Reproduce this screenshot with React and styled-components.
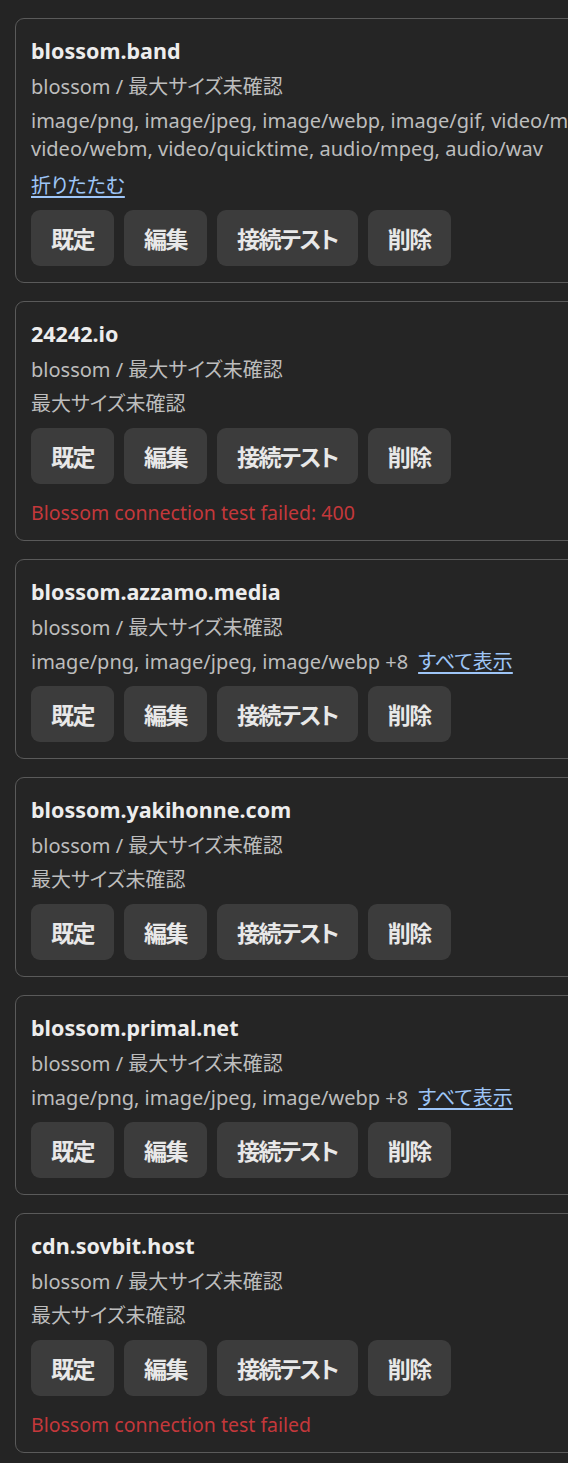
import styled, { createGlobalStyle } from 'styled-components';

const GlobalStyle = createGlobalStyle`
  html, body {
    margin: 0;
    padding: 0;
    background: #242424;
    overflow-x: hidden;
  }
  body {
    font-family: "Noto Sans", "Noto Sans CJK JP", sans-serif;
    font-feature-settings: "palt";
    color: #e6e6e6;
  }
`;

const List = styled.div`
  display: flex;
  flex-direction: column;
  gap: 18px;
  padding: 18px 0 18px 15px;
  width: 640px;
`;

const Card = styled.div`
  display: flex;
  flex-direction: column;
  gap: 6px;
  padding: 16px 15px;
  border: 1px solid #5a5a5a;
  border-radius: 9px;
  background: #252525;
`;

const Title = styled.div`
  font-size: 21.5px;
  font-weight: 700;
  line-height: 32px;
  color: #ededed;
`;

const Meta = styled.div`
  font-size: 20px;
  line-height: 28px;
  color: #bdbdbd;
`;

const Link = styled.a`
  color: #9ec5f7;
  text-decoration: underline;
  text-underline-offset: 3px;
  cursor: pointer;
  margin-left: ${(p) => (p.$inline ? '10px' : '0')};
`;

const LinkRow = styled.div`
  font-size: 20px;
  line-height: 28px;
  margin-top: 3px;
`;

const Actions = styled.div`
  display: flex;
  gap: 10px;
  margin-top: 4px;
`;

const Button = styled.button`
  height: 56px;
  padding: 0 20px;
  border: none;
  border-radius: 9px;
  background: #3c3c3c;
  color: #e8e8e8;
  font-family: inherit;
  font-feature-settings: "palt";
  font-size: 23px;
  font-weight: 700;
  letter-spacing: -1.5px;
  cursor: pointer;
`;

const ErrorText = styled.div`
  font-size: 19.5px;
  line-height: 22px;
  margin-top: 12px;
  color: #c4383b;
`;

const ALL_TYPES =
  'image/png, image/jpeg, image/webp, image/gif, video/mp4, video/webm, video/quicktime, audio/mpeg, audio/wav';

const servers = [
  { name: 'blossom.band', types: 'expanded' },
  { name: '24242.io', types: 'none', error: 'Blossom connection test failed: 400' },
  { name: 'blossom.azzamo.media', types: 'short' },
  { name: 'blossom.yakihonne.com', types: 'none' },
  { name: 'blossom.primal.net', types: 'short' },
  { name: 'cdn.sovbit.host', types: 'none', error: 'Blossom connection test failed' },
];

function ServerCard({ server }) {
  return (
    <Card>
      <Title>{server.name}</Title>
      <Meta>blossom / 最大サイズ未確認</Meta>
      {server.types === 'expanded' && (
        <>
          <Meta>{ALL_TYPES}</Meta>
          <LinkRow>
            <Link>折りたたむ</Link>
          </LinkRow>
        </>
      )}
      {server.types === 'short' && (
        <Meta>
          image/png, image/jpeg, image/webp +8
          <Link $inline>すべて表示</Link>
        </Meta>
      )}
      {server.types === 'none' && <Meta>最大サイズ未確認</Meta>}
      <Actions>
        <Button>既定</Button>
        <Button>編集</Button>
        <Button>接続テスト</Button>
        <Button>削除</Button>
      </Actions>
      {server.error && <ErrorText>{server.error}</ErrorText>}
    </Card>
  );
}

export default function App() {
  return (
    <>
      <GlobalStyle />
      <List>
        {servers.map((s) => (
          <ServerCard key={s.name} server={s} />
        ))}
      </List>
    </>
  );
}
